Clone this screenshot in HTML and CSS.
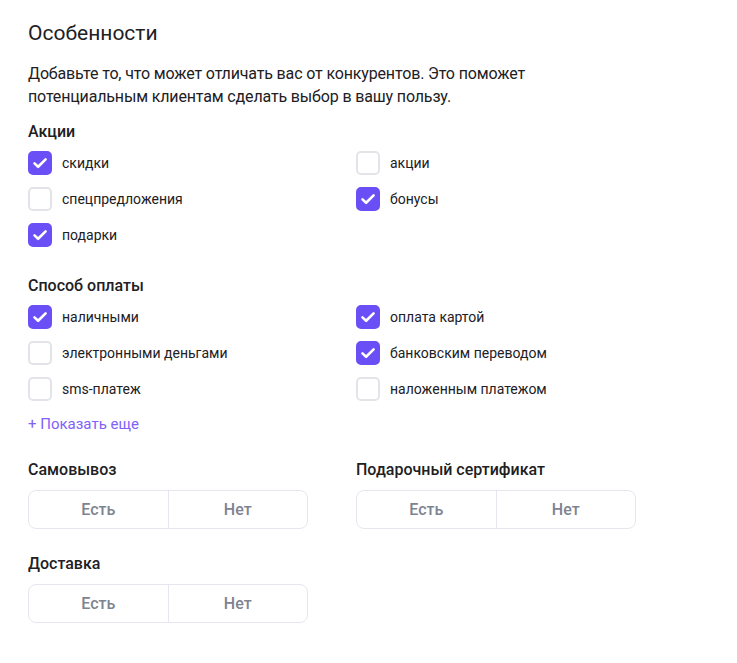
FILE: index.html
```html
<!DOCTYPE html>
<html lang="ru">
<head>
<meta charset="utf-8">
<link rel="stylesheet" href="styles.css">
</head>
<body>
<div class="page">
  <h1 class="title">Особенности</h1>
  <p class="desc">Добавьте то, что может отличать вас от конкурентов. Это поможет<br>потенциальным клиентам сделать выбор в вашу пользу.</p>

  <section class="group">
    <h2 class="group-title">Акции</h2>
    <div class="grid">
      <label class="cb"><span class="box on"><svg viewBox="0 0 24 24"><path d="M6.5 12.4l3.6 3.4L17.6 8.4"/></svg></span>скидки</label>
      <label class="cb"><span class="box"></span>акции</label>
      <label class="cb"><span class="box"></span>спецпредложения</label>
      <label class="cb"><span class="box on"><svg viewBox="0 0 24 24"><path d="M6.5 12.4l3.6 3.4L17.6 8.4"/></svg></span>бонусы</label>
      <label class="cb"><span class="box on"><svg viewBox="0 0 24 24"><path d="M6.5 12.4l3.6 3.4L17.6 8.4"/></svg></span>подарки</label>
    </div>
  </section>

  <section class="group pay">
    <h2 class="group-title">Способ оплаты</h2>
    <div class="grid">
      <label class="cb"><span class="box on"><svg viewBox="0 0 24 24"><path d="M6.5 12.4l3.6 3.4L17.6 8.4"/></svg></span>наличными</label>
      <label class="cb"><span class="box on"><svg viewBox="0 0 24 24"><path d="M6.5 12.4l3.6 3.4L17.6 8.4"/></svg></span>оплата картой</label>
      <label class="cb"><span class="box"></span>электронными деньгами</label>
      <label class="cb"><span class="box on"><svg viewBox="0 0 24 24"><path d="M6.5 12.4l3.6 3.4L17.6 8.4"/></svg></span>банковским переводом</label>
      <label class="cb"><span class="box"></span>sms-платеж</label>
      <label class="cb"><span class="box"></span>наложенным платежом</label>
    </div>
    <a class="more" href="#">+ Показать еще</a>
  </section>

  <div class="toggles">
    <div class="toggle">
      <h2 class="group-title">Самовывоз</h2>
      <div class="seg"><span>Есть</span><span>Нет</span></div>
    </div>
    <div class="toggle">
      <h2 class="group-title">Подарочный сертификат</h2>
      <div class="seg"><span>Есть</span><span>Нет</span></div>
    </div>
    <div class="toggle">
      <h2 class="group-title">Доставка</h2>
      <div class="seg"><span>Есть</span><span>Нет</span></div>
    </div>
  </div>
</div>
</body>
</html>
```

FILE: styles.css
```css
html, body {
  margin: 0;
  padding: 0;
  background: #fff;
}
body {
  font-family: Roboto, "Noto Sans", sans-serif;
  color: #21201f;
}
.page {
  padding: 20px 28px 0 28px;
}
.title {
  margin: 0;
  font-size: 21px;
  line-height: 26px;
  font-weight: 400;
}
.desc {
  margin: 16px 0 0 0;
  font-size: 16px;
  line-height: 23px;
  letter-spacing: -0.15px;
  color: #21201f;
}
.group {
  margin-top: 13px;
}
.group-title {
  margin: 0;
  font-size: 16px;
  line-height: 22px;
  font-weight: 500;
}
.grid {
  display: grid;
  grid-template-columns: 328px 328px;
  row-gap: 12px;
  margin-top: 8px;
}
.cb {
  display: flex;
  align-items: center;
  gap: 10px;
  font-size: 14px;
  line-height: 24px;
  color: #21201f;
}
.box {
  width: 24px;
  height: 24px;
  box-sizing: border-box;
  border: 2px solid #e2e4ea;
  border-radius: 5px;
  display: flex;
  align-items: center;
  justify-content: center;
  flex: none;
}
.box.on {
  background: #6b4ff6;
  border-color: #6b4ff6;
}
.box svg {
  width: 24px;
  height: 24px;
  flex: none;
  fill: none;
  stroke: #fff;
  stroke-width: 2.6;
  stroke-linecap: round;
  stroke-linejoin: round;
}
.pay {
  margin-top: 28px;
}
.more {
  display: block;
  margin-top: 13px;
  font-size: 15px;
  line-height: 20px;
  color: #8062f8;
  text-decoration: none;
}
.toggles {
  display: grid;
  grid-template-columns: 328px 328px;
  row-gap: 24px;
  margin-top: 25px;
}
.seg {
  margin-top: 9px;
  width: 280px;
  height: 39px;
  box-sizing: border-box;
  border: 1px solid #e6e6f0;
  border-radius: 8px;
  display: flex;
}
.seg span {
  flex: 1;
  display: flex;
  align-items: center;
  justify-content: center;
  font-size: 16px;
  font-weight: 500;
  color: #7e8391;
}
.seg span + span {
  border-left: 1px solid #e6e6f0;
}
```
